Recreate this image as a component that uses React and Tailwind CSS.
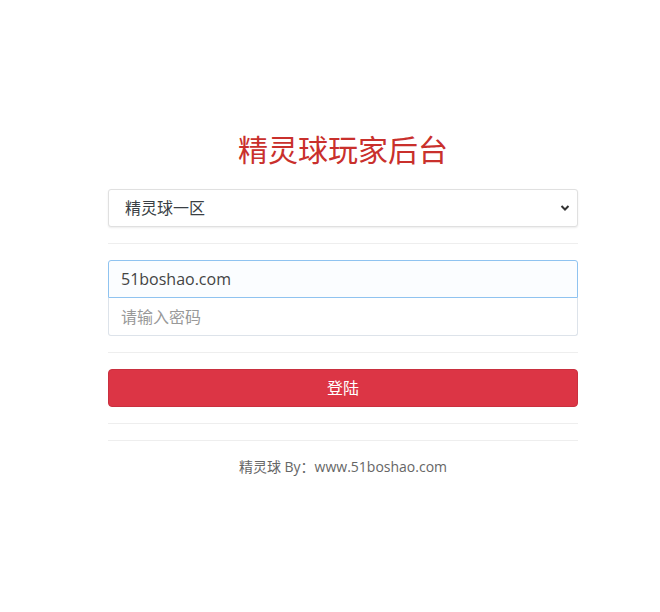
import React, { useState } from "react";

function App() {
  const [server, setServer] = useState("1");
  const [user, setUser] = useState("51boshao.com");
  const [password, setPassword] = useState("");

  return (
    <div
      className="min-h-[612px] bg-white"
      style={{ fontFamily: '"Open Sans", "Noto Sans CJK SC", sans-serif' }}
    >
      <div className="w-[470px] ml-[108px] pt-[132px]">
        <h1 className="text-center text-[30px] leading-[36px] text-[#c9302c] font-normal">
          精灵球玩家后台
        </h1>

        <div className="relative mt-[21px]">
          <select
            value={server}
            onChange={(e) => setServer(e.target.value)}
            className="appearance-none block w-full h-[38px] pl-4 pr-8 border border-[#e0e0e0] rounded-[3px] shadow-[0_1px_2px_rgba(0,0,0,0.08)] bg-white text-[16px] text-[#3a3f44] outline-none"
          >
            <option value="1">精灵球一区</option>
          </select>
          <svg
            className="absolute right-[8px] top-[15px] pointer-events-none"
            width="10"
            height="8"
            viewBox="0 0 10 8"
          >
            <path d="M1.5 2 L5 5.5 L8.5 2" stroke="#333" strokeWidth="2" fill="none" />
          </svg>
        </div>

        <hr className="my-4 border-t border-[#eeeeee]" />

        <div>
          <input
            type="text"
            value={user}
            onChange={(e) => setUser(e.target.value)}
            className="block w-full h-[38px] px-3 border border-[#8fc3f0] rounded-t-[3px] bg-[#fbfdff] text-[16px] text-[#444] outline-none"
          />
          <input
            type="password"
            placeholder="请输入密码"
            value={password}
            onChange={(e) => setPassword(e.target.value)}
            className="block w-full h-[38px] px-3 border border-t-0 border-[#dde3ea] rounded-b-[3px] bg-white text-[16px] text-[#444] placeholder:text-[#999] outline-none"
          />
        </div>

        <hr className="my-4 border-t border-[#eeeeee]" />

        <button
          type="button"
          className="block w-full h-[38px] rounded-[4px] bg-[#dc3545] border border-[#c9303f] text-white text-[16px]"
        >
          登陆
        </button>

        <hr className="my-4 border-t border-[#eeeeee]" />
        <hr className="border-t border-[#eeeeee]" />

        <p className="mt-4 text-center text-[14px] leading-[20px] text-[#666]">
          精灵球 By：www.51boshao.com
        </p>
      </div>
    </div>
  );
}

export default App;
